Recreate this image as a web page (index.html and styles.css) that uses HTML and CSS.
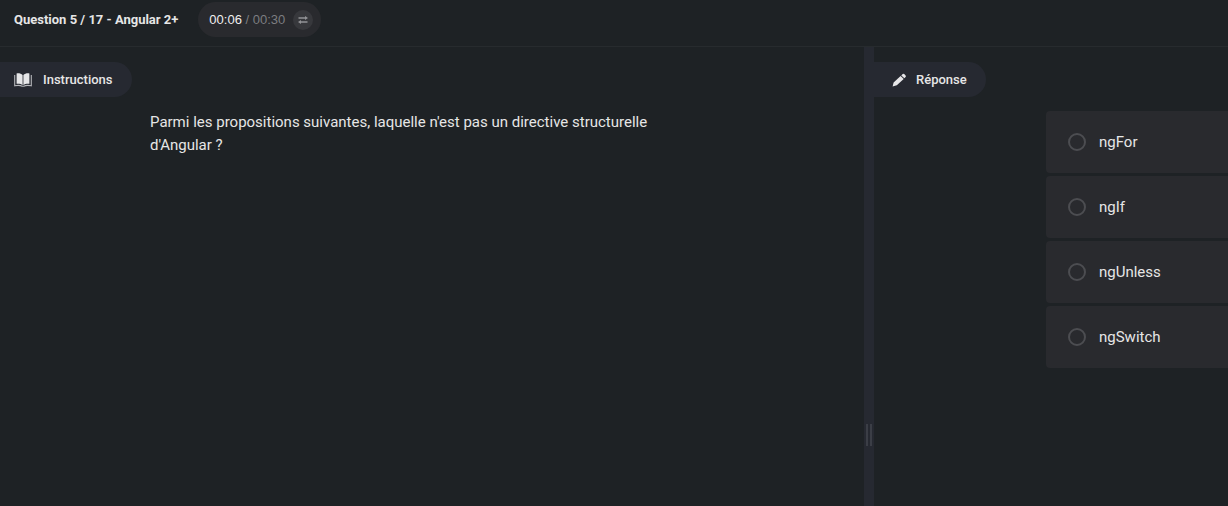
FILE: index.html
```html
<!DOCTYPE html>
<html lang="fr">
<head>
<meta charset="utf-8">
<meta name="viewport" content="width=device-width, initial-scale=1">
<title>Question 5 / 17 - Angular 2+</title>
<link rel="stylesheet" href="styles.css">
</head>
<body>
<header class="topbar">
  <h1 class="topbar-title">Question 5 / 17 - Angular 2+</h1>
  <div class="timer">
    <span class="timer-text"><span class="timer-elapsed">00:06</span> / 00:30</span>
    <button class="timer-toggle" type="button" aria-label="Inverser le minuteur">
      <svg width="10" height="8" viewBox="0 0 10 8" fill="none" stroke="currentColor" stroke-width="1.3"><path d="M0.500 2H8M2 6h7.500"/><path d="M7 0l3 2-3 2zM3 4L0 6l3 2z" fill="currentColor" stroke="none"/></svg>
    </button>
  </div>
</header>
<main class="workspace">
  <section class="pane pane-left">
    <h2 class="tab">
      <svg class="tab-icon" width="18" height="14" viewBox="0 0 18 14"><path d="M8.600 2C7.200.600 4.800.100 2.600.500V10.800C4.800 10.500 7.200 10.900 8.600 12.200zM9.400 2C10.800.600 13.200.100 15.400.500V10.800C13.200 10.500 10.800 10.900 9.400 12.200z" fill="#e6e6e8"/><path d="M.700 2V12.800C3.500 12.200 6.500 12.300 8.200 13.300h1.600C11.500 12.300 14.500 12.200 17.300 12.800V2" fill="none" stroke="#b4b5b9" stroke-width="1.100"/></svg>
      Instructions
    </h2>
    <p class="statement">Parmi les propositions suivantes, laquelle n'est pas un directive structurelle d'Angular ?</p>
  </section>
  <div class="splitter" role="separator" aria-orientation="vertical"><span class="grip"></span></div>
  <section class="pane pane-right">
    <h2 class="tab">
      <svg class="tab-icon" width="16" height="14" viewBox="0 0 16 14" fill="#e6e6e8"><path d="M1.600 13.400l1-4L9.600 3l3.100 3L5.800 12.300zM10.300 2.400L11.700 1.100q.800-.700 1.500 0l1.400 1.400q.700.700 0 1.500L13.400 5.300z"/></svg>
      Réponse
    </h2>
    <form class="options">
      <label class="option"><input class="option-radio" type="radio" name="answer">ngFor</label>
      <label class="option"><input class="option-radio" type="radio" name="answer">ngIf</label>
      <label class="option"><input class="option-radio" type="radio" name="answer">ngUnless</label>
      <label class="option"><input class="option-radio" type="radio" name="answer">ngSwitch</label>
    </form>
  </section>
</main>
</body>
</html>
```
FILE: styles.css
```css
* { box-sizing: border-box; }

body {
  margin: 0;
  min-height: 100vh;
  display: flex;
  flex-direction: column;
  background: #1e2225;
  color: #e6e6e6;
  font-family: Roboto, "Liberation Sans", sans-serif;
  font-size: 15px;
}

.topbar {
  display: flex;
  align-items: center;
  gap: 20px;
  padding: 2px 14px 9px;
  border-bottom: 1px solid #272b2e;
}

.topbar-title {
  margin: 0;
  font-size: 13px;
  font-weight: 700;
}

.timer {
  display: flex;
  align-items: center;
  gap: 8px;
  height: 35px;
  padding: 0 8px 0 11px;
  border-radius: 18px;
  background: #292a2e;
}

.timer-text {
  color: #7c7d80;
  font-family: "Liberation Sans", Arial, sans-serif;
  font-size: 13px;
}

.timer-elapsed { color: #f0f0f0; }

.timer-toggle {
  display: grid;
  place-items: center;
  width: 20px;
  height: 20px;
  padding: 0;
  border: 0;
  border-radius: 50%;
  background: #37383c;
  color: #929396;
}

.workspace {
  flex: 1;
  display: flex;
}

.pane {
  min-width: 0;
  padding-top: 15px;
  overflow: hidden;
}

.pane-left { flex: 864; }

.pane-right { flex: 354; }

.tab {
  display: flex;
  align-items: center;
  gap: 11px;
  width: fit-content;
  height: 35px;
  margin: 0;
  padding: 0 19px 0 14px;
  border-radius: 0 18px 18px 0;
  background: #262931;
  font-size: 13px;
  font-weight: 500;
}

.pane-right .tab {
  padding-left: 17px;
  gap: 9px;
}

.tab-icon { flex: none; }

.statement {
  max-width: 540px;
  margin: 14px 24px 0 150px;
  line-height: 23px;
}

.splitter {
  flex: none;
  display: flex;
  justify-content: center;
  width: 10px;
  padding-top: 377px;
  background: #262931;
}

.grip {
  width: 6px;
  height: 22px;
  border: solid #3b3e46;
  border-width: 0 2px;
}

.options {
  display: flex;
  flex-direction: column;
  gap: 3px;
  width: 560px;
  margin: 14px 0 0 172px;
}

.option {
  display: flex;
  align-items: center;
  gap: 13px;
  height: 62px;
  padding: 0 22px;
  border-radius: 4px;
  background: #292a2e;
}

.option-radio {
  appearance: none;
  width: 18px;
  height: 18px;
  margin: 0;
  border: 2px solid #4c4d51;
  border-radius: 50%;
}

.option-radio:checked { background: #e6e6e6; }
```
